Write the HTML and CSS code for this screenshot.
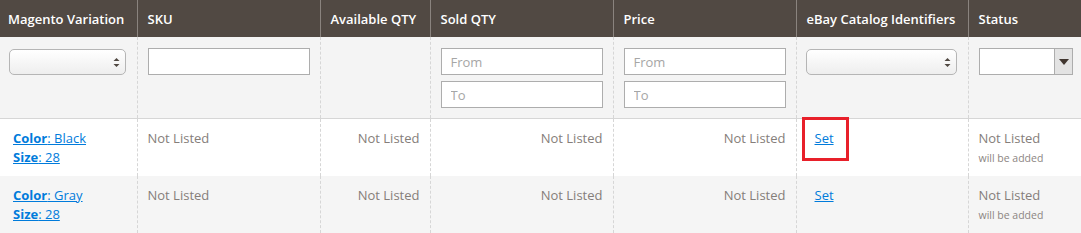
FILE: index.html
```html
<!DOCTYPE html>
<html>
<head>
	<meta content="text/html; charset=utf-8" http-equiv="content-type" />
	<title>Variations</title>
	<link rel="stylesheet" href="styles.css">
</head>

<body>
<table class="grid">
	<colgroup>
		<col class="c-var">
		<col class="c-sku">
		<col class="c-avail">
		<col class="c-sold">
		<col class="c-price">
		<col class="c-ebay">
		<col class="c-status">
	</colgroup>
	<thead>
	<tr class="head">
		<th class="first">Magento Variation</th>
		<th>SKU</th>
		<th>Available QTY</th>
		<th>Sold QTY</th>
		<th>Price</th>
		<th>eBay Catalog Identifiers</th>
		<th>Status</th>
	</tr>
	<tr class="filters">
		<td>
			<div class="sel">
				<select></select>
				<svg class="updown" width="7" height="11" viewBox="0 0 7 11"><path d="M3.5 1 L6.5 4 L0.5 4 Z M3.5 10 L6.5 7 L0.5 7 Z" fill="#514943"/></svg>
			</div>
		</td>
		<td><input type="text" class="txt"></td>
		<td></td>
		<td>
			<input type="text" class="txt" placeholder="From">
			<input type="text" class="txt second" placeholder="To">
		</td>
		<td>
			<input type="text" class="txt" placeholder="From">
			<input type="text" class="txt second" placeholder="To">
		</td>
		<td>
			<div class="sel">
				<select></select>
				<svg class="updown" width="7" height="11" viewBox="0 0 7 11"><path d="M3.5 1 L6.5 4 L0.5 4 Z M3.5 10 L6.5 7 L0.5 7 Z" fill="#514943"/></svg>
			</div>
		</td>
		<td>
			<div class="status-sel">
				<span class="status-val"></span>
				<span class="status-btn"><svg width="10" height="6" viewBox="0 0 10 6"><path d="M0 0 L10 0 L5 6 Z" fill="#41362f"/></svg></span>
			</div>
		</td>
	</tr>
	</thead>
	<tbody>
	<tr class="row">
		<td class="first"><a href="#"><b>Color</b>: Black</a><br><a href="#"><b>Size</b>: 28</a></td>
		<td>Not Listed</td>
		<td class="num">Not Listed</td>
		<td class="num">Not Listed</td>
		<td class="num">Not Listed</td>
		<td><span class="set"><a href="#">Set</a><span class="mark"></span></span></td>
		<td>Not Listed<div class="note">will be added</div></td>
	</tr>
	<tr class="row odd">
		<td class="first"><a href="#"><b>Color</b>: Gray</a><br><a href="#"><b>Size</b>: 28</a></td>
		<td>Not Listed</td>
		<td class="num">Not Listed</td>
		<td class="num">Not Listed</td>
		<td class="num">Not Listed</td>
		<td><span class="set"><a href="#">Set</a></span></td>
		<td>Not Listed<div class="note">will be added</div></td>
	</tr>
	</tbody>
</table>
</body>
</html>
```

FILE: styles.css
```css
body{margin:0;background:#fff;font-family:"Open Sans","Liberation Sans",sans-serif;font-size:13px;color:#303030;}

.grid{border-collapse:collapse;table-layout:fixed;width:1081px;font-size:13px;}
.c-var{width:137px;}
.c-sku{width:183px;}
.c-avail{width:110px;}
.c-sold{width:183px;}
.c-price{width:183px;}
.c-ebay{width:172px;}
.c-status{width:113px;}

.grid th,.grid td{padding:0 10px;vertical-align:top;text-align:left;}

.head th{background:#514943;color:#fff;font-weight:600;line-height:18px;padding-top:10px;padding-bottom:9px;border-left:1px solid #8a837e;white-space:nowrap;}
.head th.first{border-left:0;padding-left:8px;}

.filters td{background:#f4f4f4;padding-top:11px;padding-bottom:10px;border-left:1px dashed #d6d6d6;border-bottom:1px solid #d6d6d6;}
.filters td:first-child{border-left:0;}

.txt{display:block;box-sizing:border-box;width:100%;height:27px;margin:0;border:1px solid #adadad;background:#fff;padding:0 9px;font-family:"Open Sans","Liberation Sans",sans-serif;font-size:13px;color:#303030;outline:none;}
.txt::placeholder{color:#a6a6a6;}
.txt.second{margin-top:6px;}

.sel{position:relative;height:26px;margin:1px 1px 0 -1px;}
.sel select{-webkit-appearance:none;appearance:none;display:block;box-sizing:border-box;width:100%;height:26px;margin:0;border:1px solid #b5b5b5;border-radius:5px;background:linear-gradient(#ffffff,#eeeeee);outline:none;}
.sel .updown{position:absolute;right:6px;top:8px;}
.c-ebay .sel{margin:1px 1px 0 2px;}

.status-sel{display:flex;height:27px;border:1px solid #adadad;box-sizing:border-box;background:#fff;margin-right:-2px;}
.status-val{flex:1;}
.status-btn{width:17px;background:#e3e3e3;border-left:1px solid #adadad;display:flex;align-items:center;justify-content:center;}

.row td{background:#fff;line-height:18px;padding-top:10px;padding-bottom:10px;border-left:1px dashed #d6d6d6;color:#857e7a;}
.row td.first{border-left:0;padding-left:13px;line-height:19px;padding-bottom:8px;}
.row.odd td{background:#f5f5f5;}
.row td.num{text-align:right;}

.row a{color:#007bdb;text-decoration:underline;}
.row a b{font-weight:700;}

.set{position:relative;display:inline-block;margin-left:8px;}
.mark{position:absolute;left:-13px;top:-12px;width:41px;height:38px;border:3px solid #e8202a;}

.note{font-size:10.5px;line-height:16px;margin-top:3px;color:#8c8582;}
```
